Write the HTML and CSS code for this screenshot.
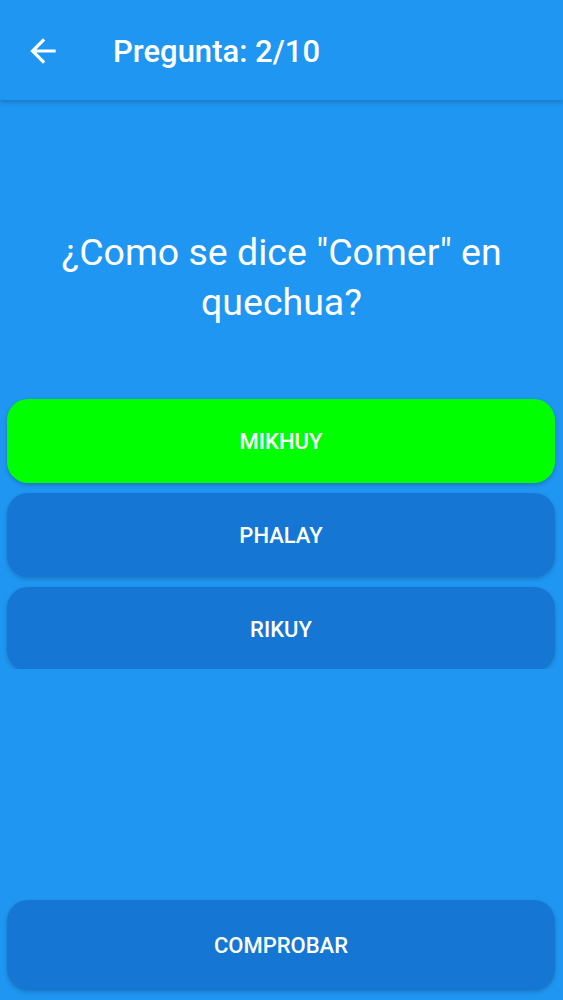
FILE: index.html
```html
<!DOCTYPE html>
<html lang="es">
<head>
<meta charset="utf-8">
<title>Pregunta</title>
<link rel="stylesheet" href="styles.css">
</head>
<body>
<div class="screen">
  <header class="toolbar">
    <button class="back" aria-label="Atrás">
      <svg viewBox="0 0 24 24" width="38" height="38"><path d="M20 11H7.83l5.59-5.59L12 4l-8 8 8 8 1.41-1.41L7.83 13H20v-2z" fill="#fff"/></svg>
    </button>
    <h1 class="title">Pregunta: 2/10</h1>
  </header>
  <main class="content">
    <p class="question">¿Como se dice "Comer" en quechua?</p>
    <div class="options">
      <button class="opt opt-selected">MIKHUY</button>
      <button class="opt">PHALAY</button>
      <button class="opt">RIKUY</button>
    </div>
  </main>
  <footer class="footer">
    <button class="opt check">COMPROBAR</button>
  </footer>
</div>
</body>
</html>
```

FILE: styles.css
```css
html, body {
  margin: 0;
  padding: 0;
  background: #1f96f2;
}
body {
  font-family: Roboto, "Noto Sans", sans-serif;
  color: #fff;
}
.screen {
  width: 563px;
  height: 1000px;
  display: flex;
  flex-direction: column;
  background: #1f96f2;
  overflow: hidden;
}
.toolbar {
  height: 100px;
  flex: none;
  display: flex;
  align-items: center;
  background: #1f96f2;
  box-shadow: 0 2px 5px rgba(0, 0, 0, 0.22);
  position: relative;
  z-index: 2;
}
.back {
  width: 38px;
  height: 38px;
  margin-left: 24px;
  padding: 0;
  border: 0;
  background: none;
  display: flex;
  margin-top: 2px;
}
.title {
  margin: 0 0 0 51px;
  font-size: 31px;
  font-weight: 500;
  line-height: 1;
  margin-top: 2px;
}
.content {
  flex: none;
  height: 569px;
  overflow: hidden;
  display: flex;
  flex-direction: column;
}
.question {
  margin: 127px 30px 0;
  text-align: center;
  font-size: 37.5px;
  line-height: 50px;
  font-weight: 400;
}
.options {
  margin-top: 72px;
  display: flex;
  flex-direction: column;
  gap: 10px;
  padding: 0 8px 0 7px;
}
.opt {
  height: 84px;
  flex: none;
  border: 0;
  border-radius: 21px;
  background: #1577d3;
  color: #fff;
  font-family: Roboto, "Noto Sans", sans-serif;
  font-size: 22px;
  font-weight: 500;
  box-shadow: 0 2px 4px rgba(0, 0, 0, 0.2);
  padding: 0;
  width: 100%;
}
.opt-selected {
  background: #00ff00;
}
.footer {
  margin-top: auto;
  padding: 0 8px 10px 7px;
  display: flex;
}
.check {
  height: 90px;
}
```
